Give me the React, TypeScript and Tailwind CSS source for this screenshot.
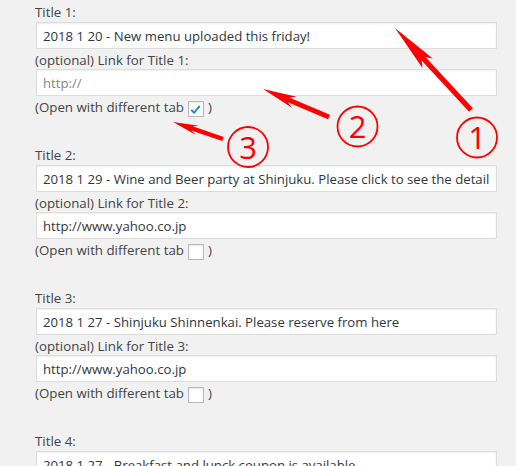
import React from 'react';

type Item = {
  title: string;
  link: string;
  newTab: boolean;
};

const items: Item[] = [
  { title: '2018 1 20 - New menu uploaded this friday!', link: '', newTab: true },
  { title: '2018 1 29 - Wine and Beer party at Shinjuku. Please click to see the detail', link: 'http://www.yahoo.co.jp', newTab: false },
  { title: '2018 1 27 - Shinjuku Shinnenkai. Please reserve from here', link: 'http://www.yahoo.co.jp', newTab: false },
  { title: '2018 1 27 - Breakfast and lunck coupon is available', link: 'http://www.yahoo.co.jp', newTab: false },
];

// polygon for a tapered arrow, tip first
const arrowPoints = (tip: number[], tail: number[], headLen: number, headHalf: number, shaftHalf: number) => {
  const dx = tail[0] - tip[0];
  const dy = tail[1] - tip[1];
  const len = Math.hypot(dx, dy);
  const ux = dx / len;
  const uy = dy / len;
  const nx = -uy;
  const ny = ux;
  const bx = tip[0] + ux * headLen;
  const by = tip[1] + uy * headLen;
  const nb = tip[0] + ux * (headLen - 6);
  const nby = tip[1] + uy * (headLen - 6);
  const pts = [
    [tip[0], tip[1]],
    [bx + nx * headHalf, by + ny * headHalf],
    [nb + nx * shaftHalf, nby + ny * shaftHalf],
    [tail[0] + nx * shaftHalf, tail[1] + ny * shaftHalf],
    [tail[0] - nx * shaftHalf, tail[1] - ny * shaftHalf],
    [nb - nx * shaftHalf, nby - ny * shaftHalf],
    [bx - nx * headHalf, by - ny * headHalf],
  ];
  return pts.map((p) => p.join(',')).join(' ');
};

const Annotations = () => (
  <svg className="pointer-events-none absolute left-0 top-0" width="516" height="466" viewBox="0 0 516 466">
    <polygon points={arrowPoints([395, 28], [471, 110], 48, 7, 2.6)} fill="#f00" />
    <polygon points={arrowPoints([263, 89], [329, 117], 34, 6, 2.4)} fill="#f00" />
    <polygon points={arrowPoints([173, 122], [223, 139], 26, 5, 2.2)} fill="#f00" />

    <circle cx="477" cy="137.5" r="20" fill="none" stroke="#f00" strokeWidth="1.8" />
    <circle cx="357.5" cy="126.5" r="20" fill="none" stroke="#f00" strokeWidth="1.8" />
    <circle cx="248" cy="147" r="20" fill="none" stroke="#f00" strokeWidth="1.8" />

    <g fill="#f00" fontFamily="'Open Sans', sans-serif" fontSize="31" textAnchor="middle">
      <text x="477" y="149">1</text>
      <text x="357.5" y="138">2</text>
      <text x="248" y="158.5">3</text>
    </g>
  </svg>
);

const Checkbox = ({ checked }: { checked: boolean }) => (
  <span className="mt-[5px] mx-[4px] flex h-[16px] w-[16px] items-center justify-center border border-[#b4b9be] bg-white shadow-[inset_0_1px_2px_rgba(0,0,0,0.1)]">
    {checked && (
      <svg width="13" height="13" viewBox="0 0 20 20">
        <path d="M3.5 10.5 L8 15 L16.5 4.5" fill="none" stroke="#1e8cbe" strokeWidth="3" strokeLinejoin="round" />
      </svg>
    )}
  </span>
);

const Field = ({ value, placeholder }: { value: string; placeholder?: string }) => (
  <input
    type="text"
    readOnly
    value={value}
    placeholder={placeholder}
    className="block h-[27px] w-full border border-[#ddd] bg-white px-[6px] text-[13.2px] text-[#32373c] shadow-[inset_0_1px_2px_rgba(0,0,0,0.07)] outline-none placeholder:text-[#80868b]"
  />
);

export default function App() {
  return (
    <div
      className="relative min-h-screen bg-[#f1f1f1] pl-[36px] pr-[19px] pt-[2px] text-[13.3px] text-[#444]"
      style={{ fontFamily: "'Open Sans', 'Noto Sans', sans-serif" }}
    >
      {items.map((item, i) => (
        <div key={i} className="mb-[27px]">
          <div className="h-[20px] leading-[20px] -ml-px">Title {i + 1}:</div>
          <Field value={item.title} />
          <div className="h-[20px] leading-[22px] -ml-px">(optional) Link for Title {i + 1}:</div>
          <Field value={item.link} placeholder="http://" />
          <div className="flex h-[22px] items-start leading-[22px] -ml-px">
            <span>(Open with different tab</span>
            <Checkbox checked={item.newTab} />
            <span>)</span>
          </div>
        </div>
      ))}
      <Annotations />
    </div>
  );
}
